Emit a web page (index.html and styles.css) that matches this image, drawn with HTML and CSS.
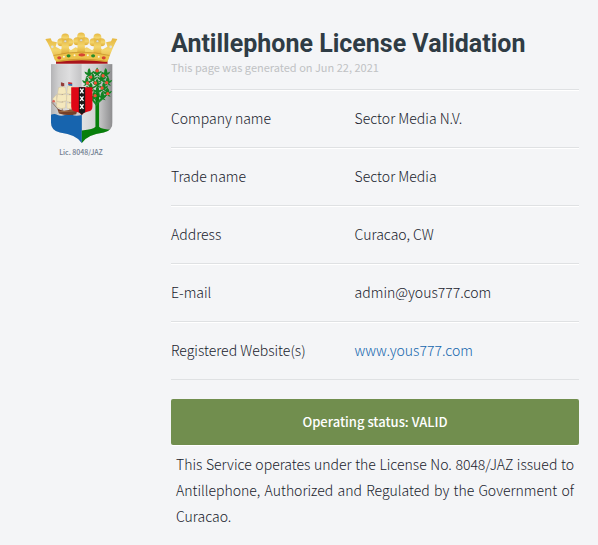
FILE: index.html
```html
<!DOCTYPE html>
<html lang="en">

<head>
    <meta charset="UTF-8">
    <meta name="viewport" content="width=device-width, initial-scale=1.0">
    <title>Antillephone License Validation</title>
    <link rel="stylesheet" href="styles.css">
</head>

<body>
    <div class="page">
        <figure class="seal">
            <svg class="crest" viewBox="30 18 220 336" role="img" aria-label="Coat of arms">
                <defs>
                    <linearGradient id="silver" x1="0" x2="1">
                        <stop offset="0" stop-color="#b4b4b6" />
                        <stop offset="0.25" stop-color="#cfcfd0" />
                        <stop offset="0.6" stop-color="#dededf" />
                        <stop offset="1" stop-color="#c2c2c4" />
                    </linearGradient>
                    <linearGradient id="silver-right" x1="0" x2="1">
                        <stop offset="0" stop-color="#e2e2e3" />
                        <stop offset="0.5" stop-color="#cfcfd0" />
                        <stop offset="1" stop-color="#8b8b8d" />
                    </linearGradient>
                    <linearGradient id="gold" x1="0" x2="0" y1="0" y2="1">
                        <stop offset="0" stop-color="#e6b842" />
                        <stop offset="0.5" stop-color="#f3d56c" />
                        <stop offset="1" stop-color="#e0ac35" />
                    </linearGradient>
                    <clipPath id="shield">
                        <path d="M48 114H234V289Q234 314 207 320Q157 326 141 352Q125 326 75 320Q48 314 48 289Z" />
                    </clipPath>
                    <g id="leaves" fill="#128322">
                        <path d="M0-12Q7-4 5 2L14-2Q11 8 4 9L10 16Q2 16 0 11Q-3 16-11 16L-4 9Q-12 8-14-2L-5 2Q-7-4 0-12Z" />
                    </g>
                    <path id="saltire" d="M-5-7L5 7M5-7L-5 7" stroke="#fff" stroke-width="4" />
                    <g id="fleuron" fill="url(#gold)">
                        <circle cy="-13" r="12" />
                        <circle cx="-12" cy="1" r="12" />
                        <circle cx="12" cy="1" r="12" />
                        <path d="M-10-8H10L12 38H-12Z" />
                        <circle r="4" cy="-2" fill="#dedfd8" stroke="#c99c33" />
                    </g>
                </defs>

                <!-- crown -->
                <path d="M64 100Q141 91 217 100L219 113H63Z" fill="#a9141b" />
                <path d="M31 38L47 36L51 45L66 48L62 62L78 70L92 59L108 72L122 63L139 70L156 63L172 72L187 59L203 70L218 62L214 48L229 45L233 36L248 38Q234 63 221 100L216 108Q141 96 66 108L59 100Q47 63 31 38Z" fill="url(#gold)" />
                <use href="#fleuron" x="91" y="47" />
                <use href="#fleuron" x="139" y="44" />
                <use href="#fleuron" x="188" y="47" />
                <circle cx="52" cy="62" r="4" fill="#dedfd8" />
                <circle cx="228" cy="62" r="4" fill="#dedfd8" />
                <path d="M56 88Q140 68 224 88L218 106Q141 92 64 106Z" fill="#edc34b" />
                <path d="M56 88Q140 68 224 88M64 106Q141 92 218 106" fill="none" stroke="#c18a27" stroke-width="2" />
                <ellipse cx="141" cy="86" rx="10" ry="5" fill="#d64432" />
                <ellipse cx="101" cy="89" rx="6" ry="5" fill="#268b2a" />
                <ellipse cx="175" cy="89" rx="6" ry="5" fill="#268b2a" />
                <ellipse cx="73" cy="95" rx="6" ry="5" fill="#d64432" />
                <ellipse cx="207" cy="95" rx="6" ry="5" fill="#d64432" />
                <g fill="#f7f3dd">
                    <circle cx="87" cy="92" r="3" />
                    <circle cx="119" cy="87" r="3" />
                    <circle cx="159" cy="87" r="3" />
                    <circle cx="192" cy="92" r="3" />
                </g>

                <g clip-path="url(#shield)">
                    <rect x="48" y="114" width="93" height="240" fill="url(#silver)" />
                    <rect x="141" y="114" width="93" height="240" fill="url(#silver-right)" />

                    <!-- sea -->
                    <path d="M48 267Q58 262 68 267T90 267T113 267T141 267V354H48Z" fill="#1764ae" />

                    <!-- orange tree -->
                    <path d="M141 314Q177 311 182 303V200H193V303Q199 311 234 312V354H141Z" fill="#087f0b" />
                    <path d="M187 238L170 217M187 232L211 210" fill="none" stroke="#188728" stroke-width="6" />
                    <use href="#leaves" x="187" y="136" />
                    <use href="#leaves" x="163" y="138" />
                    <use href="#leaves" x="213" y="138" />
                    <use href="#leaves" x="174" y="153" />
                    <use href="#leaves" x="201" y="153" />
                    <use href="#leaves" x="156" y="164" />
                    <use href="#leaves" x="219" y="163" />
                    <use href="#leaves" x="187" y="169" />
                    <use href="#leaves" x="168" y="181" />
                    <use href="#leaves" x="207" y="180" />
                    <use href="#leaves" x="188" y="191" />
                    <use href="#leaves" x="218" y="196" />
                    <use href="#leaves" x="178" y="208" />
                    <use href="#leaves" x="203" y="207" />
                    <g fill="#f05235">
                        <circle cx="187" cy="134" r="5" />
                        <circle cx="168" cy="153" r="5" />
                        <circle cx="205" cy="149" r="5" />
                        <circle cx="158" cy="171" r="5" />
                        <circle cx="182" cy="171" r="5" />
                        <circle cx="216" cy="170" r="5" />
                        <circle cx="202" cy="186" r="5" />
                        <circle cx="219" cy="203" r="5" />
                        <circle cx="181" cy="209" r="5" />
                    </g>

                    <!-- ship -->
                    <path d="M67 248Q81 257 98 253L130 246L124 265Q98 271 72 263Z" fill="#75402a" />
                    <path d="M70 258L126 254" stroke="#b68452" stroke-width="2" />
                    <path d="M82 177V254M105 171V253M121 190V250M69 250L51 229" stroke="#7b5738" stroke-width="2" />
                    <g fill="#f5e8bd" stroke="#c9b58b">
                        <path d="M71 185Q84 180 92 185L94 202Q82 207 68 203Z" />
                        <path d="M68 205Q82 209 94 204L95 224Q80 231 65 225Z" />
                        <path d="M65 227Q79 233 93 226L91 246Q78 251 65 243Z" />
                        <path d="M98 181Q109 176 116 183L118 203Q105 207 96 202Z" />
                        <path d="M96 206Q108 209 120 205V226Q109 232 95 226Z" />
                        <path d="M96 230Q107 235 119 229L117 246Q106 251 96 247Z" />
                        <path d="M53 219L65 205V234Z" />
                    </g>
                    <path d="M78 169L88 172V181L78 179Z" fill="#933c37" />
                    <path d="M100 168L112 170V175H100Z" fill="#c72c35" />
                    <path d="M100 174H112V180L100 178Z" fill="#346baf" />
                    <circle cx="56" cy="226" r="4" fill="#d8685e" />
                </g>

                <!-- arms of Amsterdam -->
                <path d="M109 184H173V242Q173 255 160 257Q146 260 141 267Q136 260 122 257Q109 255 109 242Z" fill="#df0715" />
                <path d="M132 184H151V259Q144 261 141 267Q137 261 132 259Z" fill="#181818" />
                <use href="#saltire" x="141" y="195" />
                <use href="#saltire" x="141" y="218" />
                <use href="#saltire" x="141" y="242" />
            </svg>
            <figcaption>Lic. 8048/JAZ</figcaption>
        </figure>

        <main class="license">
            <h1>Antillephone License Validation</h1>
            <p class="generated">This page was generated on Jun 22, 2021</p>

            <table class="details">
                <tr>
                    <th scope="row">Company name</th>
                    <td>Sector Media N.V.</td>
                </tr>
                <tr>
                    <th scope="row">Trade name</th>
                    <td>Sector Media</td>
                </tr>
                <tr>
                    <th scope="row">Address</th>
                    <td>Curacao, CW</td>
                </tr>
                <tr>
                    <th scope="row">E-mail</th>
                    <td>admin@yous777.com</td>
                </tr>
                <tr>
                    <th scope="row">Registered Website(s)</th>
                    <td><a href="#">www.yous777.com</a></td>
                </tr>
            </table>

            <div class="status">Operating status: VALID</div>
            <p class="statement">This Service operates under the License No. 8048/JAZ issued to Antillephone, Authorized and Regulated by the Government of Curacao.</p>
        </main>
    </div>
</body>

</html>
```
FILE: styles.css
```css
* {
    box-sizing: border-box;
}

body {
    margin: 0;
    background-color: #f4f5f7;
    color: #18222c;
    font-family: "Noto Sans CJK SC", "Open Sans", sans-serif;
    font-size: 14px;
    font-weight: 300;
    line-height: 26px;
}

.page {
    display: flex;
    padding: 28px 19px 14px 0;
}

.seal {
    flex: 0 0 162px;
    margin: 0 9px 0 0;
    padding-top: 4px;
    text-align: center;
}

.crest {
    display: block;
    width: 73px;
    height: 112px;
    margin: 0 auto;
}

.seal figcaption {
    color: #6f7b8f;
    font-size: 7px;
    font-weight: 500;
    line-height: 16px;
}

.license {
    flex: 1;
    min-width: 0;
}

h1 {
    margin: 0;
    color: #2f3c45;
    font-family: Roboto, sans-serif;
    font-size: 25px;
    font-weight: 700;
    line-height: 32px;
}

.generated {
    margin: 0 0 15px;
    color: #c0c2c4;
    font-size: 11px;
    font-weight: 400;
    line-height: 14px;
}

.details {
    width: 100%;
    table-layout: fixed;
    border-spacing: 0;
    border-top: 1px solid #dfe1e3;
}

.details th,
.details td {
    height: 58px;
    padding: 0 0 2px;
    border-top: 1px solid #ffffff;
    border-bottom: 1px solid #dfe1e3;
    text-align: left;
    font-weight: 300;
}

.details th {
    width: 45%;
}

a {
    color: #1467ae;
    text-decoration: none;
}

a:hover {
    text-decoration: underline;
}

.status {
    margin-top: 19px;
    padding: 10px;
    background-color: #718e4e;
    border-radius: 2px;
    box-shadow: 0 1px 0 #ffffff;
    color: #ffffff;
    font-size: 13px;
    font-weight: 500;
    text-align: center;
}

.statement {
    margin: 6px 5px 0;
    text-align: justify;
}
```
